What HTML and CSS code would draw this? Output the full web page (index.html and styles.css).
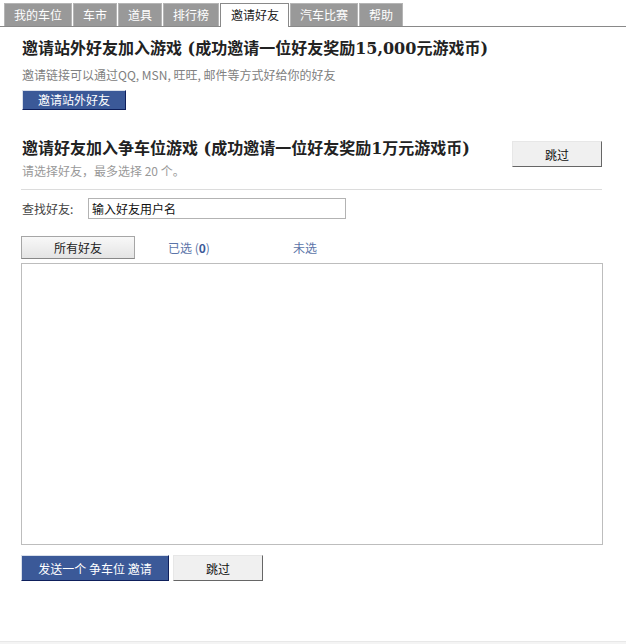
FILE: index.html
```html
<!DOCTYPE html>
<html lang="zh-CN">
<head>
<meta charset="utf-8">
<title>邀请好友</title>
<link rel="stylesheet" href="styles.css">
</head>
<body>
<div class="page">
  <ul class="tabs">
    <li class="tab">我的车位</li>
    <li class="tab">车市</li>
    <li class="tab">道具</li>
    <li class="tab">排行榜</li>
    <li class="tab active">邀请好友</li>
    <li class="tab">汽车比赛</li>
    <li class="tab">帮助</li>
  </ul>

  <div class="content">
    <section class="outside">
      <h2 class="title">邀请站外好友加入游戏 (成功邀请一位好友奖励15,000元游戏币)</h2>
      <p class="desc">邀请链接可以通过QQ, MSN, 旺旺, 邮件等方式好给你的好友</p>
      <button class="btn-blue btn-small">邀请站外好友</button>
    </section>

    <section class="inside">
      <div class="inside-head">
        <div>
          <h2 class="title">邀请好友加入争车位游戏 (成功邀请一位好友奖励1万元游戏币)</h2>
          <p class="hint">请选择好友，最多选择 20 个。</p>
        </div>
        <button class="btn-grey btn-skip">跳过</button>
      </div>
      <div class="search">
        <span class="search-label">查找好友:</span>
        <span class="search-input">输入好友用户名</span>
      </div>
      <div class="filters">
        <button class="btn-filter">所有好友</button>
        <span class="filter-link sel">已选 (<b>0</b>)</span>
        <span class="filter-link">未选</span>
      </div>
      <div class="friend-box"></div>
      <div class="actions">
        <button class="btn-blue btn-send">发送一个 争车位 邀请</button>
        <button class="btn-grey btn-skip2">跳过</button>
      </div>
    </section>
  </div>
</div>
<div class="footer"></div>
</body>
</html>
```

FILE: styles.css
```css
html, body {
  margin: 0;
  padding: 0;
  background: #fff;
}
body {
  font-family: "Noto Sans CJK SC", "Liberation Sans", sans-serif;
  font-size: 12px;
  color: #333;
}
.page {
  height: 641px;
}
.tabs {
  list-style: none;
  margin: 0;
  padding: 3px 0 0 4px;
  display: flex;
  gap: 1px;
  border-bottom: 1px solid #898989;
  height: 23px;
}
.tab {
  box-sizing: border-box;
  height: 23px;
  padding: 0 9px;
  background: #999;
  border: 1px solid #b5b5b5;
  border-bottom: none;
  color: #fff;
  line-height: 22px;
  font-size: 12px;
}
.tab.active {
  background: #fff;
  color: #222;
  border-color: #898989;
  height: 24px;
  padding: 0 9px 0 10px;
  margin-bottom: -1px;
}
.content {
  padding: 0 23px 0 21px;
}
.title {
  margin: 0;
  font-family: "DejaVu Serif", "Noto Sans CJK SC", serif;
  font-size: 16px;
  font-weight: bold;
  line-height: 20px;
  color: #222;
  padding-left: 1px;
}
.outside {
  padding-top: 12px;
}
.desc {
  margin: 8px 0 0 1px;
  line-height: 16px;
  color: #808080;
}
button {
  font-family: "Noto Sans CJK SC", "Liberation Sans", sans-serif;
  font-size: 12px;
  margin: 0;
  padding: 0;
  cursor: pointer;
}
.btn-blue {
  background: #3b5998;
  color: #fff;
  border: 1px solid;
  border-color: #d9dfea #0e1f5b #0e1f5b #d9dfea;
}
.btn-grey {
  background: #f0f0f0;
  color: #111;
  border: 1px solid;
  border-color: #e7e7e7 #666 #666 #e7e7e7;
}
.btn-small {
  display: block;
  margin: 7px 0 0 1px;
  width: 104px;
  height: 20px;
  line-height: 18px;
}
.inside {
  padding-top: 29px;
}
.inside-head {
  display: flex;
  justify-content: space-between;
  align-items: flex-start;
  padding-bottom: 10px;
  border-bottom: 1px solid #dcdcdc;
  margin-right: 1px;
}
.hint {
  margin: 4px 0 0 1px;
  line-height: 16px;
  color: #999;
}
.btn-skip {
  width: 90px;
  height: 26px;
  margin-top: 2px;
}
.search {
  display: flex;
  align-items: center;
  margin-top: 8px;
  padding-left: 1px;
}
.search-label {
  color: #444;
  width: 66px;
  line-height: 20px;
}
.search-input {
  box-sizing: border-box;
  width: 258px;
  height: 21px;
  border: 1px solid #b3b3b3;
  padding: 0 3px;
  line-height: 19px;
  color: #111;
}
.filters {
  display: flex;
  align-items: center;
  margin-top: 17px;
}
.btn-filter {
  width: 114px;
  height: 23px;
  background: linear-gradient(#f8f8f8, #e4e4e4);
  border: 1px solid #a6a6a6;
  border-bottom-color: #888;
  color: #222;
}
.filter-link {
  color: #5b74a8;
  line-height: 20px;
  margin-top: 1px;
}
.filter-link.sel {
  margin-left: 33px;
  width: 125px;
}
.filter-link b {
  color: #3b5998;
}
.friend-box {
  box-sizing: border-box;
  height: 282px;
  margin-top: 4px;
  border: 1px solid #bdbdbd;
}
.actions {
  display: flex;
  gap: 4px;
  margin-top: 10px;
}
.btn-send {
  width: 148px;
  height: 26px;
}
.btn-skip2 {
  width: 90px;
  height: 26px;
}
.footer {
  height: 3px;
  border-top: 1px solid #e8e8e8;
  background: #f4f4f4;
}
```
